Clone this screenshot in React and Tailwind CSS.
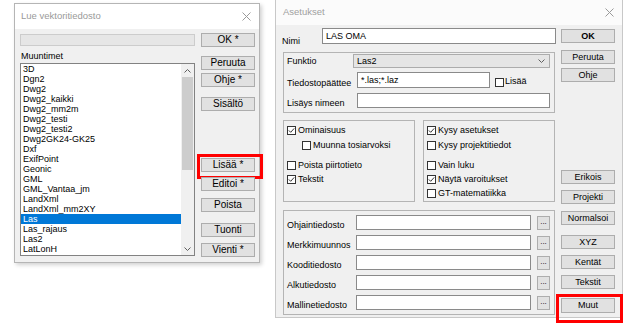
import React from 'react';

const items = [
  '3D', 'Dgn2', 'Dwg2', 'Dwg2_kaikki', 'Dwg2_mm2m', 'Dwg2_testi', 'Dwg2_testi2',
  'Dwg2GK24-GK25', 'Dxf', 'ExifPoint', 'Geonic', 'GML', 'GML_Vantaa_jm', 'LandXml',
  'LandXml_mm2XY', 'Las', 'Las_rajaus', 'Las2', 'LatLonH',
];

const Btn = ({ children, className = '' }) => (
  <div className={`relative h-[14px] shrink-0 flex items-center justify-center bg-[#e1e1e1] border border-[#adadad] text-black leading-none ${className}`}>
    {children}
  </div>
);

const Close = () => (
  <svg width="9" height="9" viewBox="0 0 9 9">
    <path d="M0.5 0.5 L8.5 8.5 M8.5 0.5 L0.5 8.5" stroke="#9a9a9a" strokeWidth="1" fill="none" />
  </svg>
);

const Check = ({ checked }) => (
  <span className="w-[9px] h-[9px] border border-[#333] bg-white flex items-center justify-center shrink-0">
    {checked && (
      <svg width="7" height="7" viewBox="0 0 7 7">
        <path d="M0.8 3.4 L2.7 5.3 L6.2 1.4" stroke="#333" fill="none" strokeWidth="1" />
      </svg>
    )}
  </span>
);

const CheckRow = ({ checked, label, className = '' }) => (
  <div className={`h-[12px] flex items-center gap-[2px] ${className}`}>
    <Check checked={checked} />
    <span className="leading-[12px]">{label}</span>
  </div>
);

const Chevron = ({ up }) => (
  <svg width="7" height="4" viewBox="0 0 7 4">
    <path d={up ? 'M0.5 3.5 L3.5 0.5 L6.5 3.5' : 'M0.5 0.5 L3.5 3.5 L6.5 0.5'} stroke="#606060" fill="none" strokeWidth="1" />
  </svg>
);

const Input = ({ value = '', className = '' }) => (
  <div className={`h-full bg-white border border-[#8a8a8a] pl-[3px] flex items-center leading-none ${className}`}>{value}</div>
);

const fileRows = ['Ohjaintiedosto', 'Merkkimuunnos', 'Kooditiedosto', 'Alkutiedosto', 'Mallinetiedosto'];

export default function App() {
  return (
    <div className="relative w-[636px] h-[329px] bg-white overflow-hidden flex items-start [font-family:'Liberation_Sans',Arial,sans-serif] text-[9px] text-black">
      {/* Lue vektoritiedosto */}
      <div className="relative ml-[14px] mt-[3px] w-[246px] h-[260px] border border-[#b5b5b5] shadow-[2px_2px_4px_rgba(0,0,0,0.18)] flex flex-col">
        <div className="h-[25px] bg-white flex items-center justify-between pl-[6px] pr-[8px] text-[9.5px] text-[#9a9a9a]">
          <span>Lue vektoritiedosto</span>
          <Close />
        </div>
        <div className="flex-1 bg-[#f0f0f0] flex pl-[5px] pr-[4px] gap-[6px]">
          <div className="w-[175px] flex flex-col">
            <div className="mt-[5px] h-[12px] bg-[#e6e6e6] border border-[#cccccc]" />
            <div className="mt-[5px] h-[11px] leading-[11px] pl-[1px]">Muuntimet</div>
            <div className="mt-[1px] h-[193px] bg-white border border-[#828282] flex">
              <div className="flex-1 flex flex-col">
                {items.map((it) => (
                  <div
                    key={it}
                    className={`h-[10px] leading-[10px] pl-[2px] whitespace-nowrap ${it === 'Las' ? 'bg-[#0078d7] text-white' : ''}`}
                  >
                    {it}
                  </div>
                ))}
              </div>
              <div className="w-[13px] bg-[#f0f0f0] flex flex-col">
                <div className="h-[13px] flex items-center justify-center"><Chevron up /></div>
                <div className="h-[93px] mx-[1px] bg-[#cdcdcd]" />
                <div className="flex-1" />
                <div className="h-[13px] flex items-center justify-center"><Chevron /></div>
              </div>
            </div>
          </div>
          <div className="w-[54px] flex flex-col text-[10px]">
            <Btn className="mt-[4px]">OK *</Btn>
            <Btn className="mt-[9px]">Peruuta</Btn>
            <Btn className="mt-[3px]">Ohje *</Btn>
            <Btn className="mt-[10px]">Sisältö</Btn>
            <Btn className="mt-[47px]">
              Lisää *
              <span className="absolute -left-[5px] -top-[5px] w-[66px] h-[25px] border-[3px] border-[#ff0000]" />
            </Btn>
            <Btn className="mt-[5px]">Editoi *</Btn>
            <Btn className="mt-[7px]">Poista</Btn>
            <Btn className="mt-[11px]">Tuonti</Btn>
            <Btn className="mt-[6px]">Vienti *</Btn>
          </div>
        </div>
      </div>

      {/* Asetukset */}
      <div className="relative ml-[15px] w-[348px] h-[318px] border-l border-r border-b border-[#c8c8c8] flex flex-col">
        <div className="h-[25px] bg-[#fbfbfb] flex items-center justify-between pl-[7px] pr-[8px] text-[9.5px] text-[#a0a0a0]">
          <span>Asetukset</span>
          <Close />
        </div>
        <div className="flex-1 bg-[#f0f0f0] flex pl-[6px] pr-[7px] gap-[5px]">
          <div className="w-[274px] flex flex-col">
            <div className="mt-[3px] h-[16px] flex">
              <span className="w-[40px] mt-[7px] leading-[12px]">Nimi</span>
              <Input value="LAS OMA" className="flex-1" />
            </div>

            <div className="mt-[8px] ml-[1px] w-[272px] h-[61px] border border-[#b4b4b4] pl-[3px] pr-[4px] pt-[1px] flex flex-col">
              <div className="h-[14px] flex">
                <span className="w-[66px] mt-[1px] leading-[12px]">Funktio</span>
                <div className="flex-1 h-full bg-[#e5e5e5] border border-[#acacac] flex items-center justify-between pl-[3px] pr-[4px] leading-none">
                  <span>Las2</span>
                  <Chevron />
                </div>
              </div>
              <div className="mt-[4px] h-[16px] flex">
                <span className="w-[70px] mt-[5px] leading-[12px]">Tiedostopäättee</span>
                <Input value="*.las;*.laz" className="w-[133px]" />
                <div className="ml-[5px] flex items-center gap-[1px] mt-[4px] h-[12px]">
                  <Check />
                  <span>Lisää</span>
                </div>
              </div>
              <div className="mt-[5px] h-[15px] flex">
                <span className="w-[70px] mt-[4px] leading-[12px]">Lisäys nimeen</span>
                <Input className="flex-1" />
              </div>
            </div>

            <div className="mt-[7px] ml-[1px] w-[272px] h-[82px] flex gap-[8px]">
              <div className="w-[132px] h-full border border-[#b4b4b4] pl-[3px] flex flex-col">
                <CheckRow checked label="Ominaisuus" className="mt-[3px]" />
                <CheckRow label="Muunna tosiarvoksi" className="mt-[3px] ml-[15px]" />
                <CheckRow label="Poista piirtotieto" className="mt-[8px]" />
                <CheckRow checked label="Tekstit" className="mt-[2px]" />
              </div>
              <div className="w-[132px] h-full border border-[#b4b4b4] pl-[3px] flex flex-col">
                <CheckRow checked label="Kysy asetukset" className="mt-[3px]" />
                <CheckRow label="Kysy projektitiedot" className="mt-[3px]" />
                <CheckRow label="Vain luku" className="mt-[8px]" />
                <CheckRow checked label="Näytä varoitukset" className="mt-[2px]" />
                <CheckRow label="GT-matematiikka" className="mt-[2px]" />
              </div>
            </div>

            <div className="mt-[8px] ml-[1px] w-[272px] h-[105px] border border-[#b4b4b4] pl-[3px] pr-[4px] pt-[4px] flex flex-col gap-[5px]">
              {fileRows.map((r) => (
                <div key={r} className="h-[15px] flex">
                  <span className="w-[69px] mt-[4px] leading-[12px] whitespace-nowrap">{r}</span>
                  <Input className="w-[175px]" />
                  <div className="ml-[6px] w-[13px] h-[14px] mt-[1px] bg-[#e1e1e1] border border-[#adadad] flex items-center justify-center text-[8px] leading-none pb-[2px]">...</div>
                </div>
              ))}
            </div>
          </div>

          <div className="w-[54px] flex flex-col">
            <Btn className="mt-[4px] font-bold">OK</Btn>
            <Btn className="mt-[7px]">Peruuta</Btn>
            <Btn className="mt-[4px]">Ohje</Btn>
            <Btn className="mt-[88px]">Erikois</Btn>
            <Btn className="mt-[6px]">Projekti</Btn>
            <Btn className="mt-[7px]">Normalsoi</Btn>
            <Btn className="mt-[10px]">XYZ</Btn>
            <Btn className="mt-[6px]">Kentät</Btn>
            <Btn className="mt-[6px]">Tekstit</Btn>
            <Btn className="mt-[9px] h-[15px]">
              Muut
              <span className="absolute -left-[6px] -top-[5px] w-[67px] h-[29px] border-[3px] border-[#ff0000]" />
            </Btn>
          </div>
        </div>
      </div>
    </div>
  );
}
